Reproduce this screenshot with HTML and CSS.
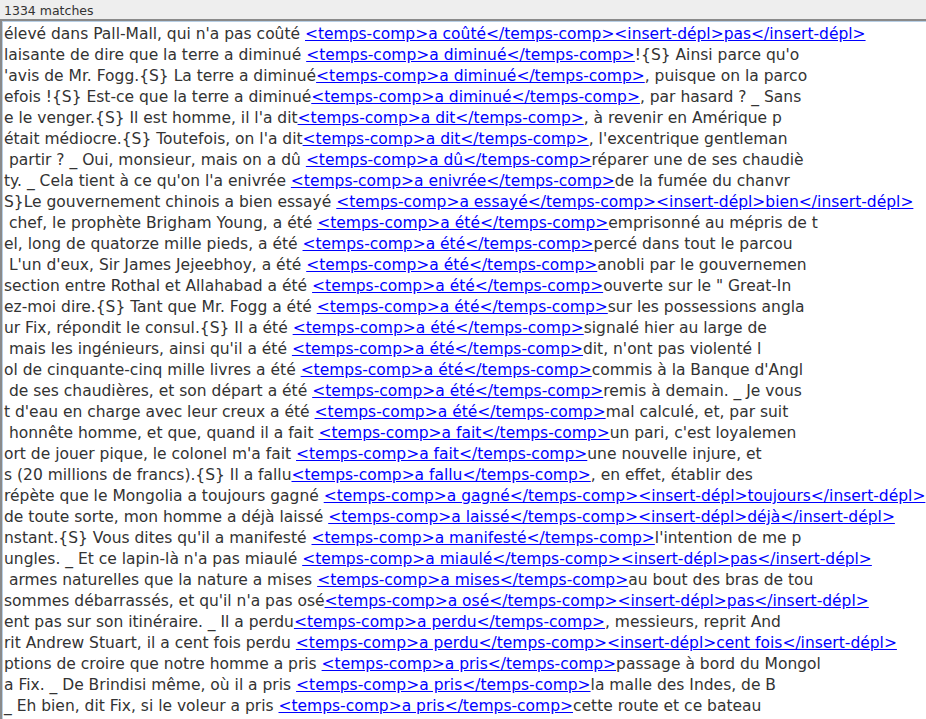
FILE: index.html
```html
<!DOCTYPE html>
<html lang="fr">
<head>
<meta charset="utf-8">
<title>Concordance</title>
<link rel="stylesheet" href="styles.css">
</head>
<body>
<div class="status">1334 matches</div>
<div class="pane">
<div class="ln">élevé dans Pall-Mall, qui n'a pas coûté <a href="#">&lt;temps-comp&gt;a coûté&lt;/temps-comp&gt;&lt;insert-dépl&gt;pas&lt;/insert-dépl&gt;</a></div>
<div class="ln">laisante de dire que la terre a diminué <a href="#">&lt;temps-comp&gt;a diminué&lt;/temps-comp&gt;</a>!{S} Ainsi parce qu'o</div>
<div class="ln">'avis de Mr. Fogg.{S} La terre a diminué<a href="#">&lt;temps-comp&gt;a diminué&lt;/temps-comp&gt;</a>, puisque on la parco</div>
<div class="ln">efois !{S} Est-ce que la terre a diminué<a href="#">&lt;temps-comp&gt;a diminué&lt;/temps-comp&gt;</a>, par hasard ? _ Sans</div>
<div class="ln">e le venger.{S} Il est homme, il l'a dit<a href="#">&lt;temps-comp&gt;a dit&lt;/temps-comp&gt;</a>, à revenir en Amérique p</div>
<div class="ln">était médiocre.{S} Toutefois, on l'a dit<a href="#">&lt;temps-comp&gt;a dit&lt;/temps-comp&gt;</a>, l'excentrique gentleman</div>
<div class="ln"> partir ? _ Oui, monsieur, mais on a dû <a href="#">&lt;temps-comp&gt;a dû&lt;/temps-comp&gt;</a>réparer une de ses chaudiè</div>
<div class="ln">ty. _ Cela tient à ce qu'on l'a enivrée <a href="#">&lt;temps-comp&gt;a enivrée&lt;/temps-comp&gt;</a>de la fumée du chanvr</div>
<div class="ln">S}Le gouvernement chinois a bien essayé <a href="#">&lt;temps-comp&gt;a essayé&lt;/temps-comp&gt;&lt;insert-dépl&gt;bien&lt;/insert-dépl&gt;</a></div>
<div class="ln"> chef, le prophète Brigham Young, a été <a href="#">&lt;temps-comp&gt;a été&lt;/temps-comp&gt;</a>emprisonné au mépris de t</div>
<div class="ln">el, long de quatorze mille pieds, a été <a href="#">&lt;temps-comp&gt;a été&lt;/temps-comp&gt;</a>percé dans tout le parcou</div>
<div class="ln"> L'un d'eux, Sir James Jejeebhoy, a été <a href="#">&lt;temps-comp&gt;a été&lt;/temps-comp&gt;</a>anobli par le gouvernemen</div>
<div class="ln">section entre Rothal et Allahabad a été <a href="#">&lt;temps-comp&gt;a été&lt;/temps-comp&gt;</a>ouverte sur le " Great-In</div>
<div class="ln">ez-moi dire.{S} Tant que Mr. Fogg a été <a href="#">&lt;temps-comp&gt;a été&lt;/temps-comp&gt;</a>sur les possessions angla</div>
<div class="ln">ur Fix, répondit le consul.{S} Il a été <a href="#">&lt;temps-comp&gt;a été&lt;/temps-comp&gt;</a>signalé hier au large de</div>
<div class="ln"> mais les ingénieurs, ainsi qu'il a été <a href="#">&lt;temps-comp&gt;a été&lt;/temps-comp&gt;</a>dit, n'ont pas violenté l</div>
<div class="ln">ol de cinquante-cinq mille livres a été <a href="#">&lt;temps-comp&gt;a été&lt;/temps-comp&gt;</a>commis à la Banque d'Angl</div>
<div class="ln"> de ses chaudières, et son départ a été <a href="#">&lt;temps-comp&gt;a été&lt;/temps-comp&gt;</a>remis à demain. _ Je vous</div>
<div class="ln">t d'eau en charge avec leur creux a été <a href="#">&lt;temps-comp&gt;a été&lt;/temps-comp&gt;</a>mal calculé, et, par suit</div>
<div class="ln"> honnête homme, et que, quand il a fait <a href="#">&lt;temps-comp&gt;a fait&lt;/temps-comp&gt;</a>un pari, c'est loyalemen</div>
<div class="ln">ort de jouer pique, le colonel m'a fait <a href="#">&lt;temps-comp&gt;a fait&lt;/temps-comp&gt;</a>une nouvelle injure, et</div>
<div class="ln">s (20 millions de francs).{S} Il a fallu<a href="#">&lt;temps-comp&gt;a fallu&lt;/temps-comp&gt;</a>, en effet, établir des</div>
<div class="ln">répète que le Mongolia a toujours gagné <a href="#">&lt;temps-comp&gt;a gagné&lt;/temps-comp&gt;&lt;insert-dépl&gt;toujours&lt;/insert-dépl&gt;</a></div>
<div class="ln">de toute sorte, mon homme a déjà laissé <a href="#">&lt;temps-comp&gt;a laissé&lt;/temps-comp&gt;&lt;insert-dépl&gt;déjà&lt;/insert-dépl&gt;</a></div>
<div class="ln">nstant.{S} Vous dites qu'il a manifesté <a href="#">&lt;temps-comp&gt;a manifesté&lt;/temps-comp&gt;</a>l'intention de me p</div>
<div class="ln">ungles. _ Et ce lapin-là n'a pas miaulé <a href="#">&lt;temps-comp&gt;a miaulé&lt;/temps-comp&gt;&lt;insert-dépl&gt;pas&lt;/insert-dépl&gt;</a></div>
<div class="ln"> armes naturelles que la nature a mises <a href="#">&lt;temps-comp&gt;a mises&lt;/temps-comp&gt;</a>au bout des bras de tou</div>
<div class="ln">sommes débarrassés, et qu'il n'a pas osé<a href="#">&lt;temps-comp&gt;a osé&lt;/temps-comp&gt;&lt;insert-dépl&gt;pas&lt;/insert-dépl&gt;</a></div>
<div class="ln">ent pas sur son itinéraire. _ Il a perdu<a href="#">&lt;temps-comp&gt;a perdu&lt;/temps-comp&gt;</a>, messieurs, reprit And</div>
<div class="ln">rit Andrew Stuart, il a cent fois perdu <a href="#">&lt;temps-comp&gt;a perdu&lt;/temps-comp&gt;&lt;insert-dépl&gt;cent fois&lt;/insert-dépl&gt;</a></div>
<div class="ln">ptions de croire que notre homme a pris <a href="#">&lt;temps-comp&gt;a pris&lt;/temps-comp&gt;</a>passage à bord du Mongol</div>
<div class="ln">a Fix. _ De Brindisi même, où il a pris <a href="#">&lt;temps-comp&gt;a pris&lt;/temps-comp&gt;</a>la malle des Indes, de B</div>
<div class="ln">_ Eh bien, dit Fix, si le voleur a pris <a href="#">&lt;temps-comp&gt;a pris&lt;/temps-comp&gt;</a>cette route et ce bateau</div>
</div>
</body>
</html>
```
FILE: styles.css
```css
html, body {
  margin: 0;
  padding: 0;
  background: #eeeeee;
  overflow: hidden;
  width: 926px;
  height: 719px;
}
.status {
  height: 19px;
  box-sizing: border-box;
  padding: 3px 0 0 4px;
  font-family: "DejaVu Sans", sans-serif;
  font-size: 12.5px;
  line-height: 15px;
  color: #333333;
  background: #eeeeee;
}
.pane {
  width: 1000px;
  height: 760px;
  background: #ffffff;
  border-top: 2px solid #8a8a8a;
  border-left: 2px solid #8a8a8a;
  box-shadow: inset 1px 1px 0 #b8cfe5;
  padding: 3px 0 0 2px;
  box-sizing: border-box;
  font-family: "DejaVu Sans", sans-serif;
  font-size: 15.5px;
  color: #333333;
}
.ln {
  white-space: pre;
  line-height: 21px;
  height: 21px;
}
.ln a {
  color: #0000ff;
  text-decoration: underline;
}
```
